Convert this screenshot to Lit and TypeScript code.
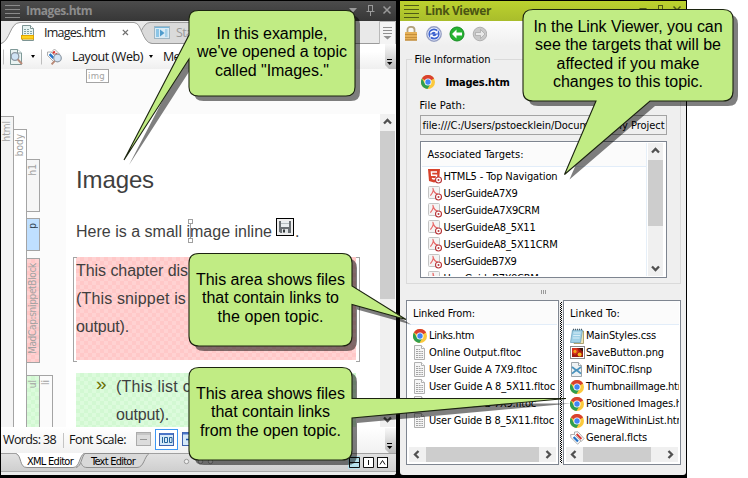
import { LitElement, html, css, svg } from "lit";
import { customElement, property } from "lit/decorators.js";

/** Single line of text, tracked so that it fills a given length. */
@customElement("fit-text")
class FitText extends LitElement {
  @property({ type: Number }) w = 0;
  static styles = css`
    :host { display: inline-block; white-space: pre; flex: none; }
  `;
  render() {
    return html`<slot></slot>`;
  }
  async firstUpdated() {
    await document.fonts.ready;
    const n = (this.textContent ?? "").length;
    const box = this.getBoundingClientRect();
    const natural = Math.max(box.width, box.height);
    if (this.w && n > 1) this.style.letterSpacing = `${(this.w - natural) / n}px`;
  }
}

const t = (text: string, w: number, cls = "") =>
  html`<fit-text class=${cls} .w=${w}>${text}</fit-text>`;

const chrome = html`<svg class="ic" width="14" height="14" viewBox="0 0 14 14">
  <circle cx="7" cy="7" r="7" fill="#fbc93d" />
  <path d="M7 7 L.9 3.5 A7 7 0 0 1 13.1 3.6 Z" fill="#d9412f" />
  <path d="M.9 3.5 A7 7 0 0 0 6.4 14 L9.8 8.6 L4.1 8.8 Z" fill="#2f9e4f" />
  <circle cx="7" cy="7" r="3.5" fill="#fff" />
  <circle cx="7" cy="7" r="2.7" fill="#4285f4" />
</svg>`;

const badge = svg`<circle cx="10.5" cy="11" r="3" fill="#fff" stroke="#b8383c" stroke-width="1.1"/>
  <circle cx="10.5" cy="11" r="1" fill="#b8383c"/>`;

const html5 = html`<svg class="ic" width="14" height="15" viewBox="0 0 14 15">
  <path d="M0 0H12L11 12L6 13.6L1 12Z" fill="#d8432c" />
  <path d="M9 3H3.4L3.7 6.2H8.6L8.3 9.3L6 10L3.9 9.3" fill="none" stroke="#fff" stroke-width="1.4" />
  ${badge}
</svg>`;

const pdf = html`<svg class="ic" width="14" height="15" viewBox="0 0 14 15">
  <rect x=".5" y=".5" width="11" height="12" rx="1" fill="#f4f4f4" stroke="#c4c4c4" />
  <path d="M4.6 2C6 3 5.4 6 2.4 9.6M5 3C5.6 5.4 7 7.6 10 8.4" fill="none" stroke="#e86a6a" stroke-width="1.2" />
  ${badge}
</svg>`;

const doc = html`<svg class="ic" width="13" height="15" viewBox="0 0 13 15">
  <path d="M1.5 .5H8.5L11.5 3.5V14.5H1.5Z" fill="#f6f6f6" stroke="#b0b0b0" />
  <path d="M8.5 .5V3.5H11.5" fill="#fff" stroke="#b0b0b0" />
  <path d="M3 4.5H7M3 6.5H10M3 8.5H10M3 10.5H10M3 12.5H10" stroke="#a4a4a4" stroke-dasharray="2 .7" />
</svg>`;

const cssFile = html`<svg class="ic" width="14" height="16" viewBox="0 0 14 16">
  <path d="M2.5 3L13.5 3V15.5H4Z" fill="#efe6b5" stroke="#9a8f55" stroke-width=".8" />
  <path d="M2.5 2H12.5L10.5 14.5H.5Z" fill="#9fd0e6" stroke="#6fa3bf" stroke-width=".8" />
  <path d="M3.5 5H10.5M3.2 7.5H10M2.8 10H9.6" stroke="#d8eef7" />
  <path d="M3 1.5H12.5" stroke="#4a5a66" stroke-width="1.6" stroke-dasharray="1 1" />
</svg>`;

const png = html`<svg class="ic" width="15" height="13" viewBox="0 0 15 13">
  <rect x=".5" y=".5" width="14" height="12" fill="#fff" stroke="#8b8b8b" />
  <rect x="2" y="2" width="11" height="9" fill="#9d1c12" />
  <path d="M2 2H7L9 6L5 9L2 7Z" fill="#d6321c" /><circle cx="5" cy="5.4" r="1.6" fill="#f3a41b" />
  <circle cx="9.6" cy="8.4" r="2" fill="#f5b91f" /><path d="M9 2H13V6Z" fill="#3b1208" />
</svg>`;

const snippet = html`<svg class="ic" width="13" height="15" viewBox="0 0 13 15">
  <path d="M1.5 .5H8.5L11.5 3.5V14.5H1.5Z" fill="#eef2f4" stroke="#9da5aa" />
  <path d="M8.5 .5V3.5H11.5" fill="#fff" stroke="#9da5aa" />
  <path d="M2 5L6.5 8.4L11 5M2 11.6L6.5 8L11 11.6" fill="none" stroke="#4b93bd" stroke-width="1.8" />
</svg>`;

const tags = html`<svg class="ic" width="15" height="14" viewBox="0 0 15 14">
  <path d="M4.5 1L8 .8L14 7.6L11 10.6L4.6 4Z" fill="#fff" stroke="#999" stroke-width=".8" />
  <path d="M6.6 3L11.4 8" stroke="#d33a36" stroke-width="2" />
  <path d="M.6 3.6L4.4 3.4L10.8 10L7.6 13.2L1 6.6Z" fill="#fff" stroke="#999" stroke-width=".8" />
  <path d="M3.6 6L8 10.6" stroke="#2272c8" stroke-width="2.2" />
</svg>`;

const chev = (dir: "u" | "d" | "l" | "r") => {
  const d = { u: "M4 9.5L7.5 6L11 9.5", d: "M4 5.5L7.5 9L11 5.5", l: "M9.5 4L6 7.5L9.5 11", r: "M5.5 4L9 7.5L5.5 11" }[dir];
  return html`<svg class="chev" width="15" height="15" viewBox="0 0 15 15">
    <path d=${d} fill="none" stroke="#505050" stroke-width="2.3" /></svg>`;
};

const winButtons = (c: string) => html`<svg class="wb" width="44" height="14" viewBox="0 0 44 14">
  <path d="M1 4H9L5 8.5Z" fill=${c} />
  <path d="M20.5 1V7.5M24.5 1V7.5M20 1.5H25M18.5 7.5H26.5M22.5 8V12" fill="none" stroke=${c} />
  <path d="M35.5 2.5L42.5 9.5M42.5 2.5L35.5 9.5" stroke=${c} stroke-width="1.5" />
</svg>`;

const burger = (c: string) => html`<svg class="burger" width="16" height="15" viewBox="0 0 16 15">
  <path d="M0 1.5H15M0 5.5H15M0 9.5H15M0 13.5H15" stroke=${c} /></svg>`;

const more = html`<svg class="more" width="11" height="25" viewBox="0 0 11 25">
  <path d="M0 0H11V25H4L0 21Z" fill="url(#mg)" />
  <defs><linearGradient id="mg" x2="0" y2="1"><stop offset="0" stop-color="#f8f8f8" /><stop offset="1" stop-color="#bbb" /></linearGradient></defs>
  <path d="M2 15.5H7" stroke="#000" /><path d="M2 18H7.4L4.7 21Z" fill="#000" />
</svg>`;

type Row = [unknown, string, number];
const targets: Row[] = [
  [html5, "HTML5 - Top Navigation", 114],
  [pdf, "UserGuideA7X9", 74],
  [pdf, "UserGuideA7X9CRM", 96],
  [pdf, "UserGuideA8_5X11", 92],
  [pdf, "UserGuideA8_5X11CRM", 114],
  [pdf, "UserGuideB7X9", 73],
  [pdf, "UserGuideB7X9CRM", 95],
];
const from: Row[] = [
  [chrome, "Links.htm", 45],
  [doc, "Online Output.fltoc", 92],
  [doc, "User Guide A 7X9.fltoc", 108],
  [doc, "User Guide A 8_5X11.fltoc", 126],
  [doc, "User Guide B 7X9.fltoc", 107],
  [doc, "User Guide B 8_5X11.fltoc", 125],
];
const to: Row[] = [
  [cssFile, "MainStyles.css", 70],
  [png, "SaveButton.png", 78],
  [snippet, "MiniTOC.flsnp", 66],
  [chrome, "ThumbnailImage.htm", 101],
  [chrome, "Positioned Images.htm", 109],
  [chrome, "ImageWithinList.htm", 100],
  [tags, "General.flcts", 61],
];
const rows = (list: Row[]) =>
  list.map(([icon, name, w]) => html`<div class="row"><span class="slot">${icon}</span>${t(name, w)}</div>`);

const bubble = (d: string) => svg`<path d=${d} transform="translate(5 5)" fill="#000" fill-opacity=".5"/>
  <path d=${d} fill="#c1ec84" stroke="#1c2410" stroke-width="1.1"/>`;

const notes: { cls: string; lines: [string, number][] }[] = [
  { cls: "n1", lines: [["In this example,", 111], ["we've opened a topic", 150], ['called "Images."', 114]] },
  { cls: "n2", lines: [["In the Link Viewer, you can", 189], ["see the targets that will be", 186], ["affected if you make", 143], ["changes to this topic.", 150]] },
  { cls: "n3", lines: [["This area shows files", 149], ["that contain links to", 137], ["the open topic.", 106]] },
  { cls: "n4", lines: [["This area shows files", 149], ["that contain links", 119], ["from the open topic.", 141]] },
];

@customElement("app-root")
class AppRoot extends LitElement {
  static styles = css`
    * { box-sizing: border-box; }
    :host { display: block; position: relative; width: 748px; height: 478px; overflow: hidden; background: #fff; color: #000; }
    svg { display: block; flex: none; }
    .frame { display: flex; isolation: isolate; width: 687px; height: 478px; background: #000; padding: 1px 1px 0 1px; gap: 4px; }
    .left { width: 395px; height: 474px; display: flex; flex-direction: column; font: 12.5px/16px "Open Sans", "Noto Sans", sans-serif; background: #fff; border-radius: 0 0 3px 0; overflow: hidden; }
    .right { width: 286px; height: 474px; background: #efefef; font: 11px/17px "DejaVu Sans Condensed", "DejaVu Sans", sans-serif; font-stretch: condensed; display: flex; flex-direction: column; border-radius: 0 0 3px 3px; overflow: hidden; }
    .title { height: 20px; flex: none; display: flex; align-items: center; font: bold 12px/20px "Open Sans", sans-serif; }
    .title .burger { margin: 0 5px 0 4px; }
    .title .wb { margin-left: auto; margin-right: 4px; }
    .dark { background: linear-gradient(#4c4c4c, #373737); color: #8d8d8d; }
    .green { background: linear-gradient(#bcd22f, #a9bd2b); color: #4a5413; }

    .tabs { height: 23px; flex: none; display: flex; position: relative; background: #e9e9e9; }
    .tabshape { position: absolute; inset: 0; }
    .tabs > * { z-index: 1; }
    .tabs > .tabshape { z-index: 0; }
    .tabicon { margin: 4px 0 0 20px; }
    .tabs .name { margin: 4px 0 0 9px; color: #222; }
    .tabs .x { margin: 8px 0 0 17px; }
    .tabs .starticon { margin: 5px 0 0 25px; }
    .tabs .inactive { margin: 4px 0 0 6px; color: #999; }
    .tools { height: 25px; flex: none; display: flex; align-items: center; background: linear-gradient(#fff 30%, #efefef); }
    .tools .more { margin-left: auto; }
    .tools .a { margin-left: 2px; }
    .tools .lay { margin-left: 9px; color: #111; }
    .tools .med { margin-left: 10px; color: #111; }
    .caret { width: 0; height: 0; border: 2.5px solid transparent; border-top: 3px solid #000; border-bottom: 0; flex: none; }
    .tools .caret { margin-left: 6px; }
    .tools .a + .caret { margin-right: 2px; }

    .editor { height: 358px; flex: none; background: #fbfbfb; display: flex; flex-direction: column; font-family: "Liberation Sans", Arial, sans-serif; overflow: hidden; }
    .tagbar { height: 45px; flex: none; padding-left: 85px; }
    .imgtag { width: 23px; height: 14px; border: 1px solid #a4a4a4; font: 9.5px/11px "DejaVu Sans Condensed", sans-serif; color: #a4a4a4; padding-left: 1px; background: #fff; }
    .canvas { flex: 1; display: flex; min-height: 0; }
    .gutter { width: 65px; flex: none; display: flex; align-items: stretch; padding-top: 2px; font: 10px/11px "DejaVu Sans Condensed", "DejaVu Sans", sans-serif; font-stretch: condensed; color: #a2a2a2; }
    .vt { writing-mode: vertical-rl; transform: rotate(180deg); text-align: right; }
    .col { width: 13px; flex: none; border: 1px solid #a4a4a4; border-left: 0; border-bottom: 0; padding-top: 4px; line-height: 11px; background: #fbfbfb; }
    .c1 { background: #f4f4f4; }
    .c2 { margin-top: 13px; background: #fff; }
    .stack { margin-top: 43px; width: 26px; display: flex; flex-direction: column; }
    .stack .col { border-bottom: 1px solid #a4a4a4; }
    .stack .h { height: 53px; margin-bottom: 6px; background: #f6f6f6; }
    .stack .p { height: 33px; margin-bottom: 7px; background: #bfdfff; color: #345; }
    .stack .check-red, .check-red { background: repeating-conic-gradient(#ffc8c8 0 25%, #ffd2d2 0 50%) 0 0 / 8px 8px; }
    .stack .check-green, .check-green { background: repeating-conic-gradient(#d2f8d2 0 25%, #dcfbdc 0 50%) 0 0 / 8px 8px; }
    .s { height: 105px; margin-bottom: 12px; }
    .pair { display: flex; height: 60px; flex: none; }
    .page { width: 314px; background: #fff; padding: 48px 0 0 7px; color: #3f3f3f; font-size: 16px; line-height: 28px; overflow: hidden; }
    .head { font-size: 24px; line-height: 36px; padding-left: 3px; }
    .inlinep { display: flex; align-items: center; height: 28px; margin-top: 20px; padding-left: 3px; }
    .save { margin: 0 1px 10px 4px; }
    .block { position: relative; width: 287px; height: 104px; margin-top: 11px; padding: 0 4px 0 3px; }
    .block::before, .block::after { content: ""; position: absolute; top: 0; bottom: -1px; width: 3px; border: 1px solid #a4a4a4; }
    .block::before { left: 0; border-right: 0; }
    .block::after { right: 0; border-left: 0; }
    .pink { height: 103px; display: flex; flex-direction: column; align-items: flex-start; }
    .list { display: flex; width: 280px; margin: 12px 0 0 3px; height: 70px; padding-left: 20px; }
    .list .m { width: 20px; color: #6b6f00; font-size: 19px; line-height: 22px; }
    .list .body { display: flex; flex-direction: column; align-items: flex-start; }
    .vscroll { width: 15px; background: #f0f0f0; display: flex; flex-direction: column; justify-content: space-between; }
    .vscroll .thumb { flex: none; background: #cdcdcd; }
    .canvas .vscroll .thumb { height: 168px; margin: 2px 0 auto; }
    .caretbox { position: absolute; left: 187px; top: 218px; }

    .status { height: 26px; flex: none; display: flex; align-items: center; padding-left: 2px; background: linear-gradient(#fff, #f1f1f1); color: #111; }
    .sep { width: 1px; height: 15px; background: #c4c4c4; margin: 0 5px 0 7px; }
    .btns { margin-left: 10px; }
    .status .more { margin-left: auto; }
    .btabs { height: 18px; flex: none; position: relative; background: linear-gradient(#e2e2e2, #cfcfcf); font: 11px/15px "DejaVu Sans Condensed", "DejaVu Sans", sans-serif; font-stretch: condensed; display: flex; align-items: center; }
    .btabs > fit-text { z-index: 1; margin-bottom: 1px; }
    .btabs .b1 { margin-left: 26px; }
    .btabs .b2 { margin-left: 18px; }
    .btabs .views { margin-left: auto; margin-right: 8px; z-index: 1; }
    .foot { flex: 1; background: #ececec; border-top: 1px solid #aaa; }

    .rtools { height: 25px; flex: none; display: flex; align-items: center; background: linear-gradient(#fdfdfd, #efefef); padding-left: 5px; }
    .group { position: relative; width: 275px; height: 225px; flex: none; margin: 13px 0 0 5.5px; border: 1px solid #dadada; padding: 12px 13px 0 13px; display: flex; flex-direction: column; }
    .legend { position: absolute; left: 5px; top: -9px; background: #efefef; padding: 0 3px; line-height: 17px; }
    .file { display: flex; align-items: center; height: 20px; padding-left: 1px; font-weight: bold; gap: 11px; }
    .fp { padding-top: 5px; height: 23px; }
    .path { height: 20px; width: 247px; border: 1px solid #a3a3a3; background: #efefef; padding-left: 2px; line-height: 19px; overflow: hidden; }
    .box { background: #fff; border: 1px solid #7e8590; overflow: hidden; display: flex; }
    .tbox { width: 247px; height: 137px; margin-top: 6px; padding: 1px; }
    .items { flex: 1; min-width: 0; overflow: hidden; }
    .tbox .items { border-right: 1px solid #e6eff8; }
    .hd { height: 24px; line-height: 20px; padding: 3px 0 0 6px; background: #fbfbfb; border-bottom: 1px solid #e2edf9; margin-bottom: 2px; }
    .tbox .hd { margin-bottom: 1px; padding-top: 2px; }
    .row { height: 17px; display: flex; align-items: center; padding-left: 6px; line-height: 17px; white-space: nowrap; }
    .slot { width: 16px; height: 16px; flex: none; display: flex; align-items: center; }
    .tbox .vscroll { margin: 0 2px 0 1px; }
    .tbox .vscroll .thumb { height: 66px; margin: 2px 0 auto; }
    .grip { height: 16px; margin-left: 141px; display: flex; align-items: center; flex: none; }
    .lower { display: flex; height: 165px; flex: none; padding-left: 6px; }
    .lbox { width: 153px; flex-direction: column; padding: 0 1px 2px; }
    .lbox .hd, .lbox .row { padding-left: 5px; }
    .lbox2 { width: 118px; }
    .dots { width: 2px; margin: 2px 1px; background: repeating-conic-gradient(#000 0 25%, #fff 0 50%) 0 0 / 2px 2px; }
    .hscroll { height: 15px; flex: none; background: #f0f0f0; display: flex; margin: 0 1px; }
    .hscroll .thumb { background: #cdcdcd; height: 15px; margin: 0 auto 0 2px; }
    .lw { width: 113px; }
    .rw { width: 68px; }

    .bubbles { position: absolute; left: 0; top: 0; }
    .note { position: absolute; display: flex; flex-direction: column; align-items: center; font: 16px/18.4px "Liberation Sans", Arial, sans-serif; }
    .n1 { left: 189px; width: 166px; top: 25px; }
    .n2 { left: 523px; width: 210px; top: 18px; }
    .n3 { left: 189px; width: 163px; top: 271px; }
    .n4 { left: 189px; width: 163px; top: 385px; }
  `;

  private tabStrip() {
    return html`<div class="tabs">
      <svg class="tabshape" width="395" height="23" viewBox="0 0 395 23">
        <path d="M0 22.5H395" stroke="#9b9b9b" />
        <path d="M133 22.5C139 17 141 1.5 149 1.5H260V22.5Z" fill="#dadada" stroke="#9b9b9b" />
        <path d="M0 23C9 20 10 1.5 20 1.5H133C141 1.5 141 22 151 22.5V24H0Z" fill="#fff" />
        <path d="M0 22.5C9 20 9 1.5 19 1.5H133C141 1.5 141 22 151 22.5" fill="none" stroke="#9b9b9b" />
        <path d="M378.5 23V.5H394.5V23" fill="#f4f4f4" stroke="#b9b9b9" />
        <path d="M382 6.5H391M382 9.5H391M382 12.5H391" stroke="#909090" /><path d="M382.5 15H390.5L386.5 18.5Z" fill="#909090" />
      </svg>
      <svg class="tabicon" width="14" height="16" viewBox="0 0 14 16">
        <path d="M1.5 .5H9.5L12.5 3.5V15.5H1.5Z" fill="#e6f3f2" stroke="#7d9594" /><path d="M9.5 .5V3.5H12.5" fill="#fff" stroke="#7d9594" />
        <path d="M3 4.5H8M3 6.5H11M3 8.5H11" stroke="#84a3a2" stroke-dasharray="2 1" />
        <rect x=".5" y="10.5" width="12" height="3.5" fill="#ffd21c" stroke="#e0a500" />
      </svg>
      ${t("Images.htm", 61, "name")}
      <svg class="x" width="7" height="7" viewBox="0 0 7 7"><path d="M.8 .8L6 6M6 .8L.8 6" stroke="#707070" stroke-width="1.2" /></svg>
      <svg class="starticon" width="16" height="13" viewBox="0 0 16 13">
        <rect x=".5" y=".5" width="15" height="12" fill="#d9ebf5" stroke="#9fb6c3" /><path d="M1 1.5H15" stroke="#74b4d8" />
        <rect x="2" y="3" width="3" height="8" fill="#8cc5e6" /><path d="M6 3.5L10.5 7L6 10.5Z" fill="#4f9ccc" /><rect x="11" y="3" width="2.5" height="8" fill="#a6d2ea" />
      </svg>
      ${t("Sta", 17, "inactive")}
    </div>`;
  }

  private toolbar() {
    return html`<div class="tools">
      <svg class="a" width="22" height="18" viewBox="0 0 22 18">
        <path d="M.5 1.5V16.5" stroke="#bdbdbd" /><path d="M7.5 1.5H14.5L18.5 5V16.5H7.5Z" fill="#e9f3f2" stroke="#7f9998" />
        <path d="M14.5 1.5V5H18.5" fill="#fff" stroke="#7f9998" /><circle cx="12" cy="8.5" r="3.8" fill="#cfe3f4" stroke="#8d98a3" stroke-width="1.3" />
        <path d="M14.8 11.3L19 16" stroke="#b98a78" stroke-width="2" />
      </svg>
      <span class="caret"></span>
      <svg width="26" height="18" viewBox="0 0 26 18">
        <path d="M4.5 1.5V16.5" stroke="#bdbdbd" />
        <path d="M15 3.5L17.5 1L22.5 6L20 8.5Z" fill="#fff" stroke="#999" stroke-width=".8" />
        <path d="M16.2 3.6L20 7.2" stroke="#dd2d28" stroke-width="2.6" stroke-dasharray="2 1" />
        <path d="M10.5 4L14 4L20 10L16.5 13.5L10.5 7.5Z" fill="#fff" stroke="#999" stroke-width=".8" /><path d="M12.6 6.2L16.6 10.2" stroke="#2272c8" stroke-width="2.6" />
        <circle cx="20.5" cy="10" r="3.8" fill="#d3e4f5" stroke="#8d98a3" stroke-width="1.2" /><path d="M17.8 12.8L14.6 16.4" stroke="#b98a78" stroke-width="2" />
      </svg>
      ${t("Layout (Web)", 71, "lay")}<span class="caret"></span>${t("Medium", 44, "med")}
      ${more}
    </div>`;
  }

  render() {
    return html`
      <div class="frame">
        <div class="left">
          <div class="title dark">${burger("#8a8a8a")}${t("Images.htm", 66)}${winButtons("#9a9a9a")}</div>
          ${this.tabStrip()}${this.toolbar()}
          <div class="editor">
            <div class="tagbar"><div class="imgtag">${t("img", 17)}</div></div>
            <div class="canvas">
              <div class="gutter">
                <div class="col c1"><div class="vt">html</div></div>
                <div class="col c2"><div class="vt">body</div></div>
                <div class="stack">
                  <div class="col h"><div class="vt">h1</div></div>
                  <div class="col p"><div class="vt">p</div></div>
                  <div class="col s check-red"><div class="vt">${t("MadCap:snippetBlock", 91)}</div></div>
                  <div class="pair"><div class="col check-green"><div class="vt">ul</div></div><div class="col"><div class="vt">li</div></div></div>
                </div>
              </div>
              <div class="page">
                <div class="head">${t("Images", 78)}</div>
                <div class="inlinep">${t("Here is a small image inline", 196)}
                  <svg class="save" width="18" height="18" viewBox="0 0 18 18">
                    <rect x=".5" y=".5" width="17" height="17" fill="#eee" stroke="#000" />
                    <path d="M3 3H15V15H4.5L3 13.5Z" fill="#6a7074" /><rect x="5" y="3" width="8" height="6" fill="#e9eef0" />
                    <path d="M5 5.5H13" stroke="#b5bdc0" /><rect x="6" y="11" width="6" height="4" fill="#dfe3e5" /><rect x="7" y="11.5" width="2" height="3" fill="#34383a" />
                  </svg>.</div>
                <div class="block"><div class="pink check-red">
                  ${t("This chapter dis", 112)}${t("(This snippet is", 110)}${t("output).", 53)}
                </div></div>
                <div class="list check-green"><div class="m">»</div><div class="body">${t("(This list c", 75)}${t("output).", 53)}</div></div>
              </div>
              <div class="vscroll">${chev("u")}<div class="thumb"></div>${chev("d")}</div>
            </div>
          </div>
          <div class="status">
            ${t("Words: 38", 53)}<span class="sep"></span>${t("Font Scale:", 57)}
            <svg class="btns" width="64" height="22" viewBox="0 0 64 22">
              <rect x=".5" y="3.5" width="14" height="13" fill="#dcdcdc" stroke="#ababab" /><path d="M4 10.5H11" stroke="#969696" /><path d="M1 5H14" stroke="#c6c6c6" stroke-width="2" />
              <rect x="19.5" y=".5" width="22" height="20" fill="#fff" stroke="#3d97f5" />
              <rect x="23.5" y="4.5" width="14" height="12" fill="#d6e9f8" stroke="#3f62ad" /><path d="M24 5H37" stroke="#4b75c7" stroke-width="2" />
              <path d="M26.5 8V14M28.5 8.5H31.5V13.5H28.5ZM33.5 8.5H36V13.5H33.5Z" fill="none" stroke="#24649b" />
              <rect x="46.5" y="3.5" width="14" height="13" fill="#d6e9f8" stroke="#3f62ad" /><path d="M50 10.5H57M53.5 7V14" stroke="#2157a8" stroke-width="1.5" /><path d="M47 4.5H60" stroke="#4b75c7" stroke-width="2" />
            </svg>
            ${more}
          </div>
          <div class="btabs">
            <svg class="tabshape" width="395" height="18" viewBox="0 0 395 18">
              <path d="M0 .5H395" stroke="#a0a0a0" />
              <path d="M75 14.5C81 13 80 4 84 .5H148C143 4 143 14.5 136 14.5H86C82 14.5 81 12 80 10" fill="#d9d9d9" stroke="#8f8f8f" />
              <path d="M15 .5C21 3 18 14.5 26 14.5H72C79 14.5 78 3 83 .5V0H15Z" fill="#fff" />
              <path d="M15 .5C21 3 18 14.5 26 14.5H72C79 14.5 78 3 83 .5" fill="none" stroke="#8f8f8f" />
              <circle cx="185.5" cy="8.5" r="2.2" fill="#eee" stroke="#999" />
              <circle cx="199.500" cy="8.5" r="2.2" fill="#eee" stroke="#999" /><circle cx="209.5" cy="8.5" r="2.2" fill="#eee" stroke="#999" />
            </svg>
            ${t("XML Editor", 46, "b1")}${t("Text Editor", 44, "b2")}
            <svg class="views" width="40" height="13" viewBox="0 0 40 13">
              <rect width="12" height="13" fill="#b5e2ec" /><path d="M1.5 1.5H11.5V11.5H1.5ZM1.5 6.5H11.5" fill="none" stroke="#111" />
              <path d="M15.5 1.5H25.5V11.5H15.5ZM20.5 4V9" fill="#fff" stroke="#111" /><rect x="29.5" y="1.5" width="10" height="10" fill="#fff" stroke="#111" />
              <path d="M32 8.5L34.5 4.5L37 8.5" fill="none" stroke="#111" />
            </svg>
          </div>
          <div class="foot"></div>
        </div>

        <div class="right">
          <div class="title green">${burger("#4f5a16")}${t("Link Viewer", 66)}${winButtons("#4f5a16")}</div>
          <div class="rtools">
            <svg width="82" height="16" viewBox="0 0 82 16">
              <path d="M2.5 7V3.5C2.5 0 9.5 0 9.5 3.5V7" fill="none" stroke="#b3a27c" stroke-width="1.8" />
              <rect y="6" width="12" height="8.5" rx=".5" fill="#e6b158" /><path d="M0 8.5H12M0 11.5H12" stroke="#c68f3b" /><path d="M0 14H12" stroke="#b07a2c" />
              <circle cx="29" cy="8" r="7.2" fill="#eef2ff" stroke="#96a0c4" stroke-width="1.4" /><circle cx="29" cy="8" r="5.6" fill="#3c62cf" />
              <path d="M25.5 7.5C26 4.8 29.5 4.5 31.3 6M32.5 8.5C32 11.2 28.5 11.5 26.7 10" fill="none" stroke="#fff" stroke-width="1.5" />
              <path d="M32.8 3.8V7.5H29.5ZM25.2 12.2V8.5H28.5Z" fill="#fff" />
              <circle cx="52" cy="8" r="7" fill="#25b332" stroke="#188c23" /><path d="M47 8L51.5 3.5V6.5H57V9.5H51.5V12.5Z" fill="#fff" />
              <circle cx="75" cy="8" r="6.8" fill="#c9c9c9" stroke="#b0b0b0" /><path d="M80 8L75.5 3.5V6.5H70.5V9.5H75.5V12.5Z" fill="#e9e9e9" stroke="#a5a5a5" stroke-width=".7" />
            </svg>
          </div>
          <div class="group">
            <div class="legend">${t("File Information", 76)}</div>
            <div class="file">${chrome}${t("Images.htm", 64)}</div>
            <div class="fp">${t("File Path:", 46)}</div>
            <div class="path">${t("file:///C:/Users/pstoecklein/Documents/My Project", 242)}</div>
            <div class="box tbox">
              <div class="items"><div class="hd">${t("Associated Targets:", 96)}</div>${rows(targets)}</div>
              <div class="vscroll">${chev("u")}<div class="thumb"></div>${chev("d")}</div>
            </div>
          </div>
          <div class="grip"><svg width="6" height="4" viewBox="0 0 6 4"><path d="M.5 0V4M2.5 0V4M4.5 0V4" stroke="#9a9a9a" /></svg></div>
          <div class="lower">
            <div class="box lbox">
              <div class="items"><div class="hd">${t("Linked From:", 62)}</div>${rows(from)}</div>
              <div class="hscroll">${chev("l")}<div class="thumb lw"></div>${chev("r")}</div>
            </div>
            <div class="dots"></div>
            <div class="box lbox lbox2">
              <div class="items"><div class="hd">${t("Linked To:", 50)}</div>${rows(to)}</div>
              <div class="hscroll">${chev("l")}<div class="thumb rw"></div>${chev("r")}</div>
            </div>
          </div>
        </div>
      </div>

      <svg class="caretbox" width="8" height="26" viewBox="0 0 8 26">
        <path d="M3.5 5V21" stroke="#a0a0a0" /><rect x="1.5" y="1.5" width="4" height="4" fill="#fff" stroke="#a0a0a0" /><rect x="1.5" y="20.5" width="4" height="4" fill="#fff" stroke="#a0a0a0" />
      </svg>
      <svg class="bubbles" width="748" height="478" viewBox="0 0 748 478">
        ${bubble("M198.5 10.5H346Q355 10.5 355 19V87Q355 96 346 96H198.5Q189 96 189 87V59L124 160L189 35V19Q189 10.5 198.5 10.5Z")}
        ${bubble("M533 9.5H723Q733 9.5 733 19V91Q733 101 723 101H650L564.5 174.5L596 101H533Q523 101 523 91V19Q523 9.5 533 9.5Z")}
        ${bubble("M199 253.5H342Q352 253.5 352 263V286L406 319.5L352 304.5V336Q352 346 342 346H199Q189 346 189 336V263Q189 253.5 199 253.5Z")}
        ${bubble("M199 367.5H342Q352 367.5 352 377V398.5H566L352 418V450Q352 460 342 460H199Q189 460 189 450V377Q189 367.5 199 367.5Z")}
      </svg>
      ${notes.map((n) => html`<div class="note ${n.cls}">${n.lines.map(([s, w]) => t(s, w))}</div>`)}
    `;
  }
}
